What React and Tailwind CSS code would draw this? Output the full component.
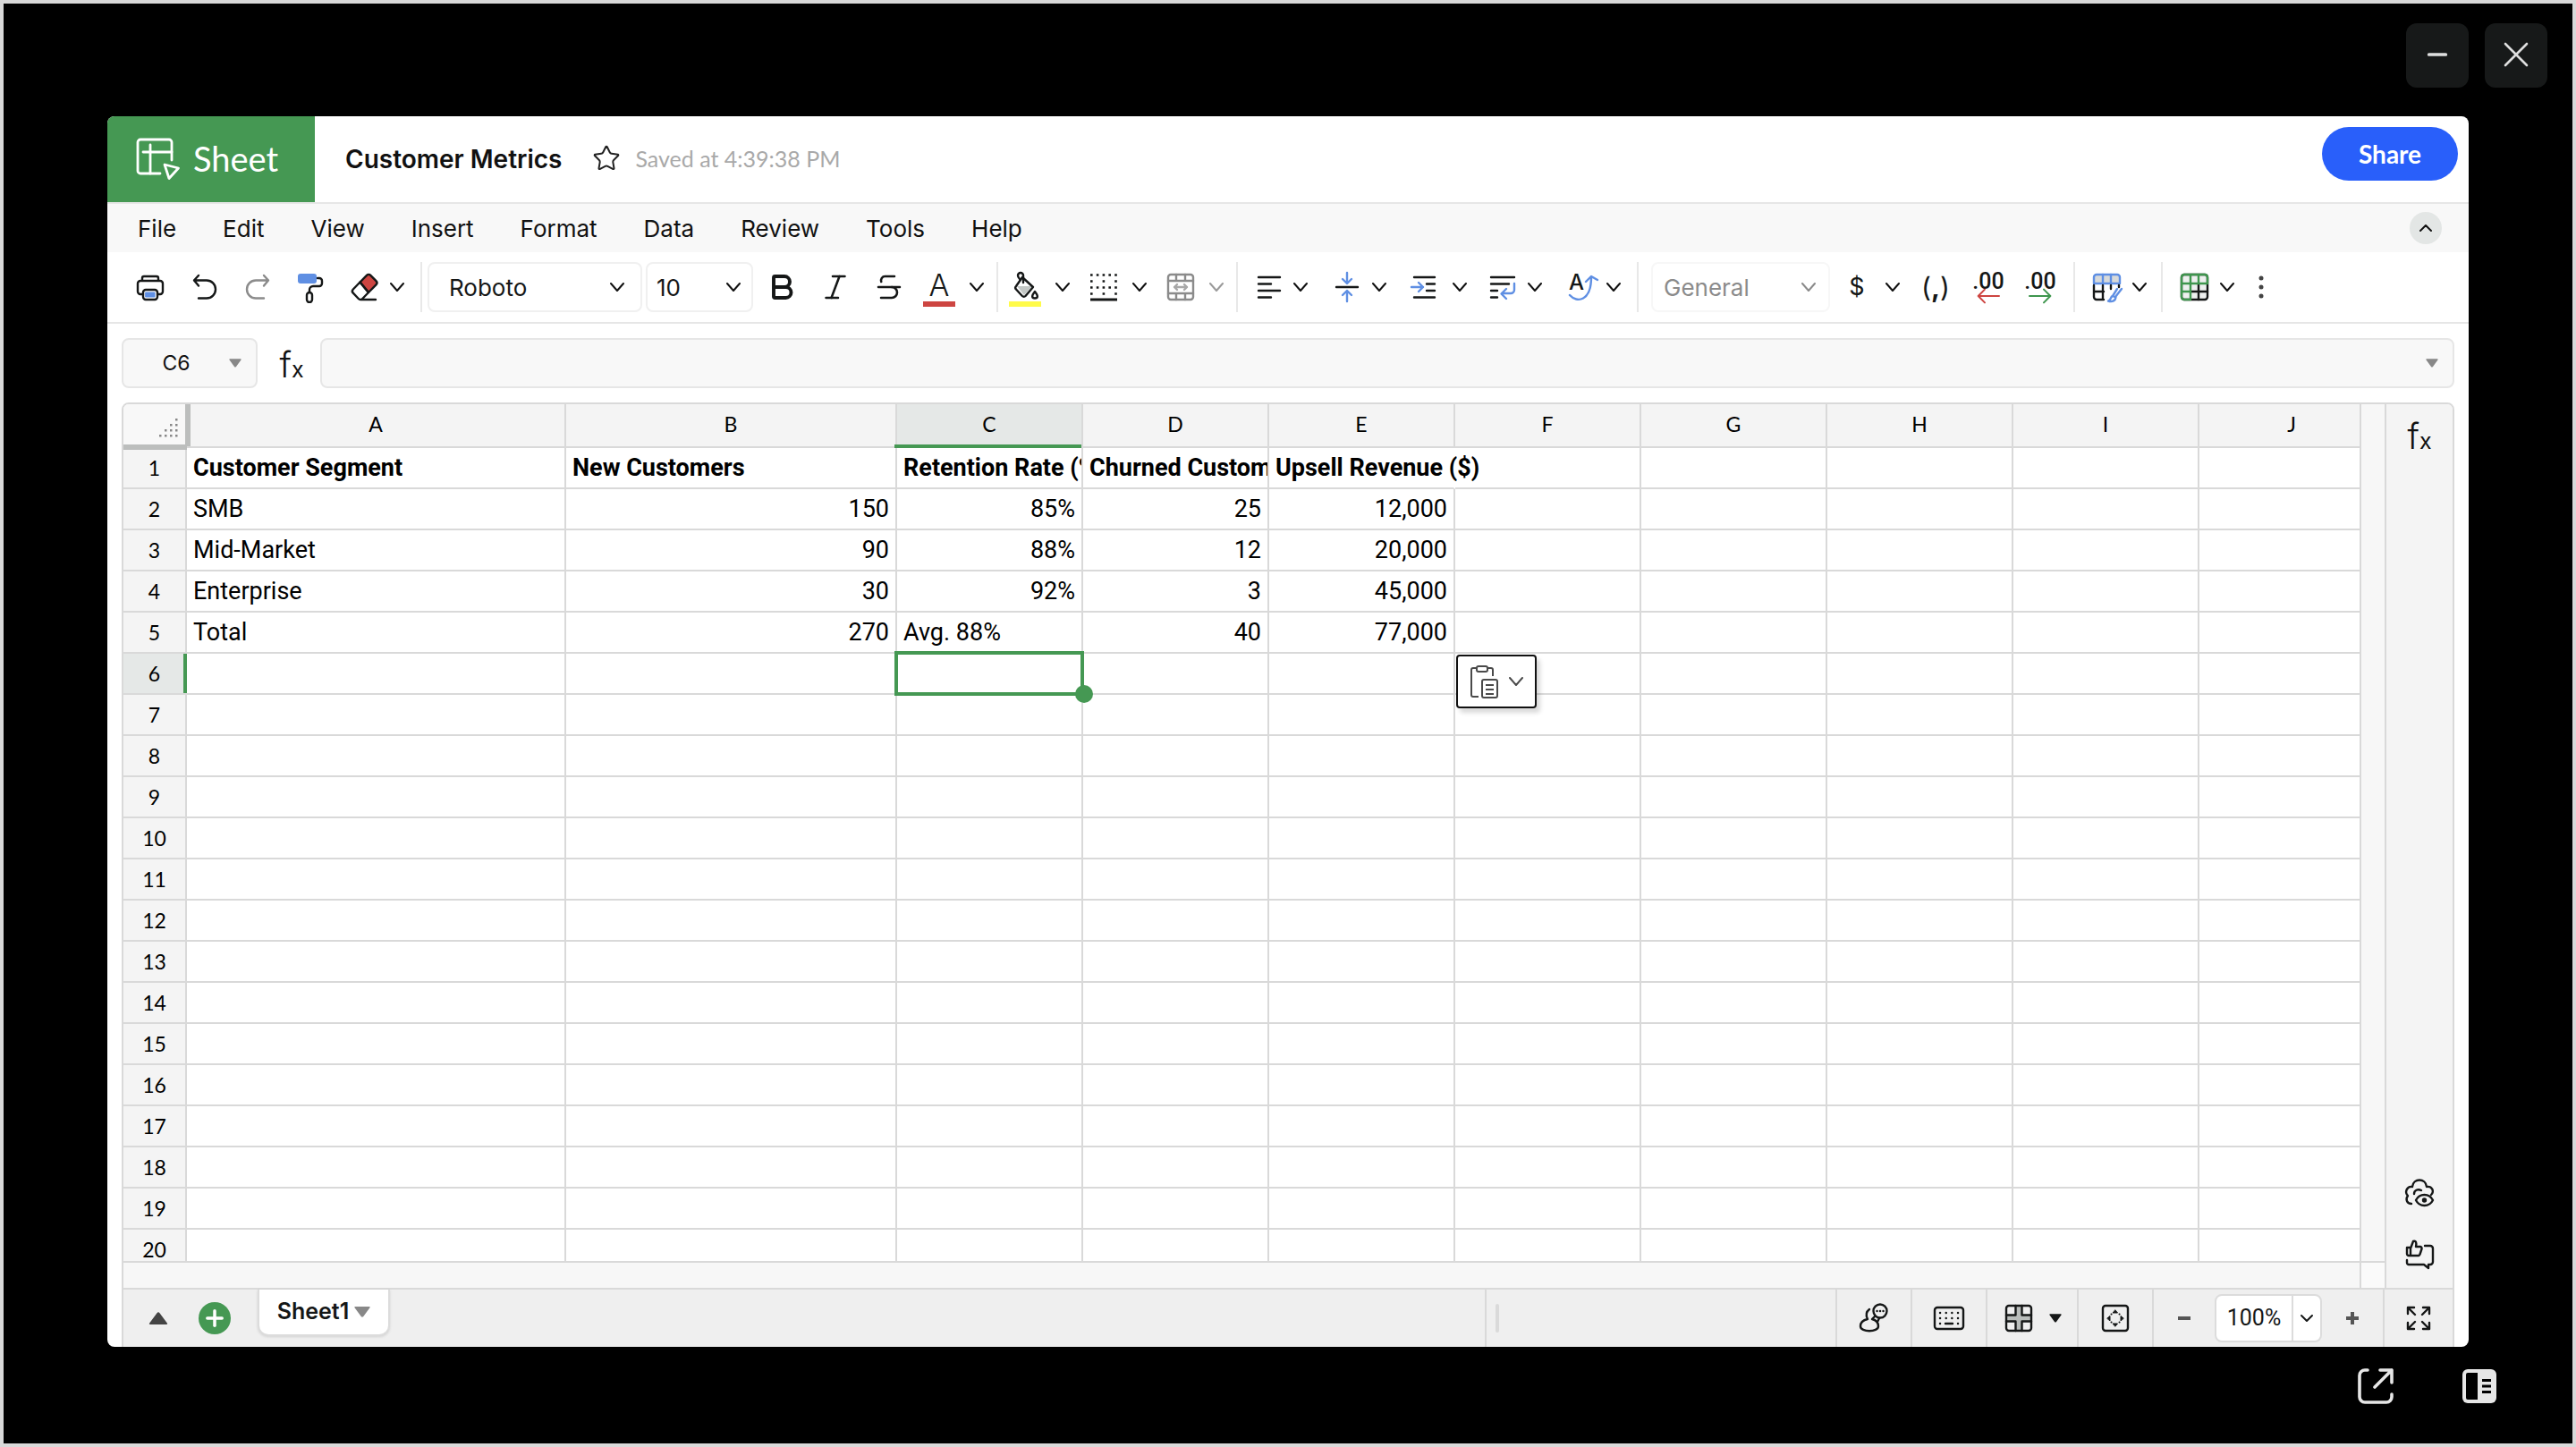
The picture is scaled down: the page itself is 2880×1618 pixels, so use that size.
import React, { useState } from "react";
import { Bold, Italic, Strikethrough, Star, Minus, Plus, X, ChevronDown, ChevronUp } from "lucide-react";

const MENUS = ["File", "Edit", "View", "Insert", "Format", "Data", "Review", "Tools", "Help"];
const COLUMNS = ["A", "B", "C", "D", "E", "F", "G", "H", "I", "J"];
const ROW_COUNT = 20;

// cell values by row number, in column order
const CELLS = {
    1: ["Customer Segment", "New Customers", "Retention Rate (%)", "Churned Customers", "Upsell Revenue ($)"],
    2: ["SMB", "150", "85%", "25", "12,000"],
    3: ["Mid-Market", "90", "88%", "12", "20,000"],
    4: ["Enterprise", "30", "92%", "3", "45,000"],
    5: ["Total", "270", "Avg. 88%", "40", "77,000"],
};

function Icon({ children, className = "size-9" }) {
    return (
        <svg viewBox="0 0 36 36" fill="none" stroke="currentColor" strokeWidth="2.4" strokeLinecap="round" strokeLinejoin="round" className={`shrink-0 ${className}`} aria-hidden="true">
            {children}
        </svg>
    );
}

function Chevron({ className = "text-[#111]" }) {
    return (
        <svg viewBox="0 0 16 10" fill="none" stroke="currentColor" strokeWidth="2" strokeLinecap="round" strokeLinejoin="round" className={`h-2.5 w-4 shrink-0 ${className}`} aria-hidden="true">
            <path d="M1 1l7 8 7-8" />
        </svg>
    );
}

function Triangle({ className }) {
    return (
        <svg viewBox="0 0 18 12" fill="currentColor" className={`shrink-0 ${className}`} aria-hidden="true">
            <path d="M1.500 0h15q2 0 .8 1.500L10.300 11q-1.300 1.500-2.600 0L.7 1.500Q-.5 0 1.500 0z" />
        </svg>
    );
}

function ToolButton({ label, className = "w-15", children }) {
    return (
        <button type="button" aria-label={label} className={`flex h-14 shrink-0 items-center justify-center ${className}`}>
            {children}
        </button>
    );
}

// icon and its arrow as one button
function ToolMenu({ label, className, children, muted }) {
    return (
        <button type="button" aria-label={label} aria-haspopup="menu" className={`flex h-14 shrink-0 items-center ${muted ? "text-[#8b8b8b]" : ""} ${className}`}>
            {children}
            <Chevron className={muted ? "text-[#9a9a9a]" : "text-[#111]"} />
        </button>
    );
}

function ToolSelect({ label, value, className, selectClass, arrowClass = "right-4", disabled }) {
    return (
        <div className={`relative h-14 shrink-0 ${className}`}>
            <select aria-label={label} defaultValue={value} disabled={disabled} className={`h-full w-full appearance-none rounded-lg border-2 bg-white text-[26px] ${selectClass}`}>
                <option>{value}</option>
            </select>
            <span className={`pointer-events-none absolute inset-y-0 flex items-center ${arrowClass}`}>
                <Chevron className={disabled ? "text-[#8b8b8b]" : "text-[#111]"} />
            </span>
        </div>
    );
}

function Divider({ className }) {
    return <span className={`h-14 w-0.5 shrink-0 bg-[#e8e8e8] ${className}`} />;
}

function FxMark() {
    return (
        <span className="flex items-baseline font-['Inter',sans-serif] leading-none text-[#111]">
            <span className="text-[39px] font-light">f</span>
            <span className="text-[25px]">x</span>
        </span>
    );
}

function Header() {
    return (
        <header className="flex h-24 shrink-0 items-center">
            <div className="flex h-full w-58 items-center gap-3.5 bg-[#459853] pl-8 text-white">
                <svg viewBox="0 0 50 50" fill="none" stroke="currentColor" strokeWidth="2.800" strokeLinejoin="round" strokeLinecap="round" className="size-[50px]" aria-hidden="true">
                    <path d="M27 41H5a3 3 0 0 1-3-3V6a3 3 0 0 1 3-3h32a3 3 0 0 1 3 3v20" />
                    <path d="M16 9v32M8 17h32" />
                    <path d="M32 31l15.500 4-10.500 11.500z" />
                </svg>
                <span className="pb-0.5 font-['Lato',sans-serif] text-[38px] leading-none">Sheet</span>
            </div>
            <h1 className="ml-8.5 text-[28px] font-semibold text-[#111]">Customer Metrics</h1>
            <button type="button" aria-label="Add to favourites" className="ml-8.5 pb-0.5">
                <Star className="size-8 text-[#222]" strokeWidth={1.5} />
            </button>
            <span className="ml-4 font-['Lato',sans-serif] text-[25px] text-[#a9a9a9]">Saved at 4:39:38 PM</span>
            <button type="button" className="mr-3 mb-3 ml-auto h-15 w-38 rounded-full bg-[#295ffa] font-['Lato',sans-serif] text-[28px] font-bold text-white">Share</button>
        </header>
    );
}

function MenuBar() {
    return (
        <nav className="flex h-14 shrink-0 items-center gap-13 border-t-2 border-[#e6e6e6] bg-[#f8f8f8] pl-8.5 text-[26px] text-[#111]">
            {MENUS.map((menu) => (
                <button key={menu} type="button">{menu}</button>
            ))}
            <button type="button" aria-label="Collapse toolbar" className="mr-7.5 ml-auto flex size-9 items-center justify-center rounded-full bg-[#e3e6e5]">
                <ChevronUp className="size-6" />
            </button>
        </nav>
    );
}

function Toolbar() {
    return (
        <div role="toolbar" aria-label="Formatting" className="flex h-20 shrink-0 items-center border-b-2 border-[#e6e6e6] pl-4.5 text-[#151717]">
            <ToolButton label="Print">
                <Icon>
                    <path d="M9 11V8a2 2 0 0 1 2-2h14a2 2 0 0 1 2 2v3M10 26H7a3 3 0 0 1-3-3v-9a3 3 0 0 1 3-3h22a3 3 0 0 1 3 3v9a3 3 0 0 1-3 3h-3" />
                    <rect x="10" y="21" width="16" height="11" rx="3" />
                    <path d="M13 24h10v5H13z" fill="#5f8fe3" stroke="#5f8fe3" strokeWidth="1" />
                </Icon>
            </ToolButton>
            <ToolButton label="Undo">
                <Icon><path d="M12 5l-5 5.500 5 6M7 10.500h14a9.500 9.500 0 0 1 0 20h-9" /></Icon>
            </ToolButton>
            <ToolButton label="Redo">
                <Icon className="size-9 text-[#8b8b8b]"><path d="M25 5l5 5.500-5 6M30 10.500H16a9.500 9.500 0 0 0 0 20h9" /></Icon>
            </ToolButton>
            <ToolButton label="Format painter">
                <Icon>
                    <rect x="3" y="3" width="21" height="11" rx="3" fill="#5f8fe3" stroke="none" />
                    <path d="M25 8h2a3 3 0 0 1 3 3v3a3 3 0 0 1-3 3h-7a4 4 0 0 0-4 4v3" />
                    <rect x="13" y="24" width="6" height="11" rx="3" />
                </Icon>
            </ToolButton>
            <ToolMenu label="Clear" className="ml-3 gap-2.5">
                <Icon>
                    <path d="M12.500 12.500L20 4.800a3 3 0 0 1 4.300 0l6.200 6.400a3 3 0 0 1 0 4.200L22 24z" fill="#cd4541" />
                    <path d="M12.500 12.500L4.800 20.500a3 3 0 0 0 0 4.200l6 6.300a3 3 0 0 0 4.400 0L22 24zM13 32h17" />
                </Icon>
            </ToolMenu>
            <Divider className="ml-[18px]" />
            <ToolSelect label="Font" value="Roboto" className="ml-1.5 w-60" selectClass="border-[#f0f0f0] pl-5.5" arrowClass="right-5" />
            <ToolSelect label="Font size" value="10" className="ml-1 w-30" selectClass="border-[#f0f0f0] pl-2.5" arrowClass="right-3.5" />
            <ToolButton label="Bold" className="ml-0.5 w-15"><Bold className="size-9" strokeWidth={2.6} /></ToolButton>
            <ToolButton label="Italic"><Italic className="size-9" strokeWidth={1.7} /></ToolButton>
            <ToolButton label="Strikethrough"><Strikethrough className="size-9" strokeWidth={1.7} /></ToolButton>
            <ToolMenu label="Text colour" className="ml-2 gap-4">
                <span className="flex h-11 w-9 flex-col items-center justify-end border-b-6 border-[#cd4541] text-[34px] leading-9 font-light">A</span>
            </ToolMenu>
            <Divider className="ml-3.5" />
            <ToolMenu label="Fill colour" className="ml-3 gap-4">
                <span className="flex h-11 w-9 items-end border-b-6 border-[#fffb4a]">
                    <Icon>
                        <path d="M9 19h17l-9 10z" fill="#c4c8c6" stroke="none" />
                        <path d="M15 9l12 11-8.500 10a2.500 2.500 0 0 1-3.600 0L8 22.500a2.500 2.500 0 0 1 0-3.500z" />
                        <path d="M16 15V7a3 3 0 0 0-6 0c0 2 1 3 2 4" />
                        <path d="M29 25c-4 5-3.500 7.500 0 7.500s4-2.500 0-7.500z" />
                    </Icon>
                </span>
            </ToolMenu>
            <ToolMenu label="Borders" className="ml-5 gap-3.5">
                <Icon>
                    <path d="M3 4.500h30M3 18.500h30" strokeWidth="2.600" strokeDasharray="2.600 4.200" strokeLinecap="butt" />
                    <path d="M3 11.500h30M3 25.500h30" strokeWidth="2.600" strokeDasharray="2.600 11" strokeLinecap="butt" />
                    <path d="M3 32h30" strokeWidth="3" strokeLinecap="butt" />
                </Icon>
            </ToolMenu>
            <ToolMenu label="Merge cells" className="ml-5 gap-3.5" muted>
                <Icon>
                    <rect x="4" y="4" width="28" height="28" rx="3" />
                    <path d="M4 11h28M4 25h28M13 4v7M23 4v7M13 25v7M23 25v7" />
                    <path d="M11 18h14M14 15l-3 3 3 3M22 15l3 3-3 3" stroke="#a8a8a8" />
                </Icon>
            </ToolMenu>
            <Divider className="ml-3.5" />
            <ToolMenu label="Horizontal align" className="ml-4 gap-2.5">
                <Icon><path d="M7 7h24M7 14.500h14M7 22h24M7 29.500h14" /></Icon>
            </ToolMenu>
            <ToolMenu label="Vertical align" className="ml-6.5 gap-2.5">
                <Icon>
                    <path d="M6 18h24" />
                    <path d="M18 2v11M13 9l5 5 5-5M18 34V23M13 27l5-5 5 5" stroke="#5f8fe3" />
                </Icon>
            </ToolMenu>
            <ToolMenu label="Indent" className="ml-6 gap-3.5">
                <Icon>
                    <path d="M7 7h23M21 14.500h9M21 22h9M7 29.500h23" />
                    <path d="M4 18h13M12 13l5 5-5 5" stroke="#5f8fe3" />
                </Icon>
            </ToolMenu>
            <ToolMenu label="Text wrap" className="ml-5.5 gap-2.5">
                <Icon>
                    <path d="M5 7h26M5 14.500h20M5 22h7M5 29.500h7" />
                    <path d="M31 14v7a4 4 0 0 1-4 4H17M22 20l-5.500 5.500L22 31" stroke="#5f8fe3" />
                </Icon>
            </ToolMenu>
            <ToolMenu label="Text rotation" className="ml-7 gap-2">
                <span className="relative flex size-9 items-center">
                    <span className="pb-2.5 pl-0.5 text-[24px] leading-none font-medium">A</span>
                    <Icon className="absolute inset-0 size-9">
                        <path d="M3 27c8 9 24 7 24-20M21 12l6-6 7 4" stroke="#5f8fe3" />
                    </Icon>
                </span>
            </ToolMenu>
            <Divider className="ml-4.5" />
            <ToolSelect label="Number format" value="General" className="ml-3.5 w-50" selectClass="border-[#f7f7f7] pl-3 text-[#8b8b8b] opacity-100" disabled />
            <ToolMenu label="Currency" className="ml-3 gap-3.5">
                <span className="w-9 text-center text-[27px]">$</span>
            </ToolMenu>
            <ToolButton label="Comma style" className="ml-2.5 w-15">
                <span className="text-[30px]">(<b>,</b>)</span>
            </ToolButton>
            <ToolButton label="Decrease decimals" className="w-14.5 pt-1.5">
                <span className="flex flex-col items-center font-['Roboto',sans-serif] text-[25px] leading-5 font-medium">
                    .00
                    <Icon className="-mt-1.5 h-6 w-7 text-[#cd4541]"><path d="M36 18H1M12 7L1 18l11 11" strokeWidth="3" /></Icon>
                </span>
            </ToolButton>
            <ToolButton label="Increase decimals" className="w-14.5 pt-1.5">
                <span className="flex flex-col items-center font-['Roboto',sans-serif] text-[25px] leading-5 font-medium">
                    .00
                    <Icon className="-mt-1.5 h-6 w-7 text-[#3f964e]"><path d="M0 18h35M24 7l11 11-11 11" strokeWidth="3" /></Icon>
                </span>
            </ToolButton>
            <Divider className="ml-2" />
            <ToolMenu label="Format as table" className="ml-4.5 gap-2.5">
                <Icon>
                    <path d="M3 14V7a3 3 0 0 1 3-3h23a3 3 0 0 1 3 3v7z" fill="#d8dada" stroke="#5f8fe3" />
                    <path d="M13 4v10M22 4v10" stroke="#5f8fe3" />
                    <path d="M3 16v13a3 3 0 0 0 3 3h8M13 16v16M3 23h11M22 16v4M31 16v2" />
                    <path d="M34 20l-7 9M29 20l-5 8M24 28c-3 1-1 4-5 5.500 5 1.500 8-.5 8.500-4z" stroke="#5f8fe3" />
                </Icon>
            </ToolMenu>
            <Divider className="ml-4" />
            <ToolMenu label="Insert cells" className="ml-4.5 gap-2.5">
                <Icon>
                    <rect x="3" y="4" width="29" height="28" rx="3" fill="#eef0ef" />
                    <path d="M13 23h19M22 14v18" />
                    <path d="M13 32H6a3 3 0 0 1-3-3V7a3 3 0 0 1 3-3h23a3 3 0 0 1 3 3v7H3M13 4v28M22 4v10M3 23h10" stroke="#3f964e" />
                </Icon>
            </ToolMenu>
            <ToolButton label="More">
                <Icon>
                    <g fill="#444" stroke="none"><circle cx="18" cy="8" r="2.500" /><circle cx="18" cy="18" r="2.500" /><circle cx="18" cy="28" r="2.500" /></g>
                </Icon>
            </ToolButton>
        </div>
    );
}

function FormulaBar() {
    return (
        <div className="flex h-22 shrink-0 items-center px-4 pb-px">
            <div className="flex h-14 w-38 items-center rounded-lg border-2 border-[#e6e6e6] bg-[#f8f8f8] pr-4">
                <input aria-label="Name box" defaultValue="C6" className="w-full min-w-0 pt-0.5 text-center text-[23px] text-[#111]" />
                <Triangle className="h-2.5 w-3.5 text-[#888]" />
            </div>
            <div className="flex w-[70px] justify-center pt-1 pl-1.5"><FxMark /></div>
            <div className="flex h-14 flex-1 items-center rounded-lg border-2 border-[#e6e6e6] bg-[#f8f8f8] pr-4">
                <input aria-label="Formula" className="h-full flex-1 px-3 text-[26px]" />
                <Triangle className="h-2.5 w-3.5 text-[#888]" />
            </div>
        </div>
    );
}

function PasteOptions() {
    return (
        <button type="button" aria-label="Paste options" className="absolute top-px left-px z-10 flex h-15 w-[90px] items-center justify-center gap-2.5 rounded border-2 border-[#111] bg-white text-[#4a4a4a] shadow-[4px_5px_5px_rgba(0,0,0,0.15)]">
            <svg viewBox="0 0 34 38" fill="none" stroke="currentColor" strokeWidth="2" className="h-[38px] w-[34px]" aria-hidden="true">
                <path d="M10 36H4a2 2 0 0 1-2-2V6a2 2 0 0 1 2-2h4M20 4h4a2 2 0 0 1 2 2v7" />
                <rect x="8" y="2" width="12" height="6" rx="2" />
                <rect x="14" y="17" width="17" height="20" rx="2" />
                <path d="M18 23h9M18 28h9M18 33h9" />
            </svg>
            <Chevron className="text-[#4a4a4a]" />
        </button>
    );
}

function Cell({ row, col, value }) {
    const heading = row === 1;
    const numeric = /^[\d,]+%?$/.test(value || "");
    // the last heading runs over into the empty cell on its right
    const spill = heading && col === "E";
    return (
        <td className={`relative h-[46px] border-r-2 border-b-2 border-b-[#d9d9d9] px-[7px] whitespace-nowrap ${spill ? "border-r-transparent" : "border-r-[#d9d9d9]"} ${spill || row === 6 ? "" : "overflow-clip"} ${heading ? "font-bold" : ""} ${numeric ? "text-right" : "text-left"}`}>
            {value}
            {row === 6 && col === "C" && (
                <>
                    <span className="absolute -inset-[3px] z-10 border-4 border-[#459853]" />
                    <span className="absolute -right-[13px] -bottom-[11px] z-10 size-5 rounded-full bg-[#459853]" />
                </>
            )}
            {row === 6 && col === "F" && <PasteOptions />}
        </td>
    );
}

function Grid() {
    const rows = Array.from({ length: ROW_COUNT }, (_, i) => i + 1);
    return (
        <div className="min-h-0 min-w-0 flex-1 overflow-hidden">
            <table className="w-[2529px] table-fixed border-separate border-spacing-0 font-['Roboto',sans-serif] text-[27px] leading-8 text-black">
                <colgroup>
                    <col className="w-[71px]" />
                    <col className="w-[424px]" />
                    <col className="w-[370px]" />
                    {COLUMNS.slice(2).map((c) => <col key={c} className="w-[208px]" />)}
                </colgroup>
                <thead>
                    <tr className="h-[49px] bg-[#f4f4f4] font-['Lato',sans-serif] text-[23px]">
                        <td className="relative border-b-2 border-[#bcbebd] bg-[#f8f8f8]">
                            <span className="absolute top-0 -right-1 h-[47px] w-1.5 bg-[#bcbebd]" />
                            <span className="absolute right-0 -bottom-1 left-0 z-10 h-1.5 bg-[#bcbebd]" />
                            <svg viewBox="0 0 22 22" fill="#888" className="absolute right-2.5 bottom-2.5 size-[22px]" aria-hidden="true">
                                <path d="M19 1h2.500v2.500H19zM13 7h2.500v2.500H13zM19 7h2.500v2.500H19zM7 13h2.500v2.500H7zM13 13h2.500v2.500H13zM19 13h2.500v2.500H19zM1 19h2.500v2.500H1zM7 19h2.500v2.500H7zM13 19h2.500v2.500H13zM19 19h2.500v2.500H19z" />
                            </svg>
                        </td>
                        {COLUMNS.map((c) => (
                            <th key={c} scope="col" className={`border-r-2 border-b-2 border-[#d9d9d9] pb-1 font-normal ${c === "C" ? "relative bg-[#e5e8e7]" : ""}`}>
                                {c}
                                {c === "C" && <span className="absolute right-0 -bottom-0.5 -left-[3px] h-1 bg-[#459853]" />}
                            </th>
                        ))}
                    </tr>
                </thead>
                <tbody>
                    {rows.map((row) => (
                        <tr key={row}>
                            <th scope="row" className={`border-r-2 border-b-2 border-[#d9d9d9] font-['Lato',sans-serif] text-[23px] font-normal ${row === 6 ? "relative bg-[#e5e8e7]" : "bg-[#f4f4f4]"}`}>
                                {row}
                                {row === 6 && <span className="absolute inset-y-0 -right-0.5 w-1 bg-[#459853]" />}
                            </th>
                            {COLUMNS.map((c, i) => (
                                <Cell key={c} row={row} col={c} value={CELLS[row]?.[i]} />
                            ))}
                        </tr>
                    ))}
                </tbody>
            </table>
        </div>
    );
}

function SidePanel() {
    return (
        <aside className="flex w-[76px] shrink-0 flex-col items-center border-l-2 border-[#d9d9d9] bg-[#f4f4f4] pt-4 text-[#151717]">
            <button type="button" aria-label="Functions"><FxMark /></button>
            <button type="button" aria-label="View settings" className="mt-auto">
                <Icon>
                    <path d="M9 30C4 30 2 25 5 21C1 17 4 10 10 11C11 1 25 1 26 11C32 10 35 16 31 20" />
                    <path d="M12 19c0-4 4-6 8-4" />
                    <path d="M14 26c4-8 15-8 19 0-4 8-15 8-19 0z" />
                    <circle cx="23.500" cy="26" r="1.500" fill="currentColor" />
                </Icon>
            </button>
            <button type="button" aria-label="Feedback" className="mt-8 mb-5">
                <Icon>
                    <path d="M4 11h4v9H6a2 2 0 0 1-2-2zM8 12l3-8c3-1 4 1 3 6h5a2 2 0 0 1 1.500 2.500l-2 6A2 2 0 0 1 17 20H8" />
                    <path d="M24 9h6a3 3 0 0 1 3 3v15a3 3 0 0 1-3 3h-2v4l-5-4H6a2 2 0 0 1-2-2v-3" />
                </Icon>
            </button>
        </aside>
    );
}

function StatusBar() {
    const [zoom, setZoom] = useState(100);
    const cell = "flex shrink-0 items-center justify-center border-l-2 border-[#d9d9d9]";
    return (
        <footer className="mx-4 flex h-16 shrink-0 border-x-2 border-[#d9d9d9] bg-[#efefef] text-[#151717]">
            <button type="button" aria-label="All sheets" className="ml-6.5 flex items-center">
                <Triangle className="h-3.5 w-6.5 rotate-180 text-[#444]" />
            </button>
            <button type="button" aria-label="Add sheet" className="ml-8 flex size-9 items-center justify-center self-center rounded-full bg-[#459853] text-white">
                <Plus className="size-7" strokeWidth={3} />
            </button>
            <button type="button" className="ml-7.5 flex h-[52px] w-37 items-center justify-center gap-1.5 rounded-b-xl border-x-2 border-b-2 border-[#dcdcdc] bg-white text-[25px] font-semibold shadow-[0_1px_3px_rgba(0,0,0,0.12)]">
                Sheet1
                <Triangle className="h-3 w-4.5 text-[#888]" />
            </button>
            <div className="ml-auto flex w-[392px] shrink-0 items-center border-l-2 border-[#d9d9d9] pl-2.5">
                <span className="h-8 w-1 rounded-full bg-[#dadada]" />
            </div>
            <button type="button" aria-label="Comments" className={`${cell} w-21`}>
                <Icon>
                    <path d="M13 8c-4 3-4 7-2 11-5 1-8 4-8 8 0 7 20 7 20 0 0-4-3-7-7-8l3-3" />
                    <circle cx="25" cy="10" r="7.500" />
                    <path d="M21.500 10h.1M25 10h.1M28.500 10h.1M24 18l-2 4" />
                </Icon>
            </button>
            <button type="button" aria-label="Keyboard" className={`${cell} w-21`}>
                <Icon>
                    <rect x="2" y="6" width="32" height="24" rx="3" />
                    <path d="M8 12h.1M14.700 12h.1M21.300 12h.1M28 12h.1M8 18h.1M14.700 18h.1M21.300 18h.1M28 18h.1M8 24h.1M28 24h.1M14 24h8" />
                </Icon>
            </button>
            <button type="button" aria-label="Freeze panes" className={`${cell} w-[102px] gap-4`}>
                <Icon>
                    <path d="M14 4h8v28h-8zM4 14h28v8H4z" fill="#b9bdbb" stroke="none" />
                    <rect x="4" y="4" width="28" height="28" rx="3" />
                    <path d="M14.500 4v10.500H4M21.500 4v10.500H32M14.500 32V21.500H4M21.500 32V21.500H32" />
                </Icon>
                <Triangle className="h-2.5 w-3.5" />
            </button>
            <button type="button" aria-label="Fit to screen" className={`${cell} w-21`}>
                <Icon>
                    <rect x="4" y="4" width="28" height="28" rx="3" />
                    <path d="M18 9l2.500 3h-5zM18 27l2.500-3h-5zM9 18l3-2.500v5zM27 18l-3-2.500v5z" fill="currentColor" strokeWidth="1" />
                    <path d="M13.500 13.500h.1M22.500 13.500h.1M13.500 22.500h.1M22.500 22.500h.1" strokeWidth="2" />
                </Icon>
            </button>
            <div className={`${cell} w-[258px]`}>
                <button type="button" aria-label="Zoom out" onClick={() => setZoom(zoom - 10)} className="flex size-6 items-center justify-center text-[#555]">
                    <Minus className="size-6" strokeWidth={4} strokeLinecap="butt" />
                </button>
                <div className="mx-5.5 flex h-[54px] w-30 items-center rounded-lg border-2 border-[#dcdcdc] bg-white">
                    <input aria-label="Zoom" readOnly value={`${zoom}%`} className="w-[84px] text-center font-['Roboto',sans-serif] text-[25px]" />
                    <button type="button" aria-label="Zoom levels" className="flex h-full flex-1 items-center justify-center border-l-2 border-[#dcdcdc]">
                        <ChevronDown className="size-6" strokeWidth={2} />
                    </button>
                </div>
                <button type="button" aria-label="Zoom in" onClick={() => setZoom(zoom + 10)} className="flex size-6 items-center justify-center text-[#555]">
                    <Plus className="size-6" strokeWidth={4} strokeLinecap="butt" />
                </button>
            </div>
            <button type="button" aria-label="Full screen" className={`${cell} w-[78px]`}>
                <Icon>
                    <path d="M6 13V6h7M23 6h7v7M30 23v7h-7M13 30H6v-7M7 7l7 7M29 7l-7 7M29 29l-7-7M7 29l7-7" />
                </Icon>
            </button>
        </footer>
    );
}

export default function App() {
    return (
        <div className="h-screen bg-[#d9d9d9] p-1 font-['Inter',sans-serif]">
            <div className="flex h-full flex-col bg-black">
                <div className="flex h-[126px] shrink-0 justify-end gap-4.5 pt-5.5 pr-7 text-[#dedede]">
                    <button type="button" aria-label="Minimize" className="flex h-18 w-[70px] items-center justify-center rounded-xl bg-[#171919] pb-0.5">
                        <Minus className="size-8" strokeWidth={2.8} />
                    </button>
                    <button type="button" aria-label="Close" className="flex h-18 w-[70px] items-center justify-center rounded-xl bg-[#171919] pb-0.5">
                        <X className="size-12" strokeWidth={1.3} />
                    </button>
                </div>
                <main className="mx-[116px] flex min-h-0 flex-1 flex-col overflow-hidden rounded-lg bg-white">
                    <Header />
                    <MenuBar />
                    <Toolbar />
                    <FormulaBar />
                    <div className="mx-4 flex min-h-0 flex-1 overflow-hidden rounded-t-lg border-2 border-[#d9d9d9]">
                        <div className="flex min-w-0 flex-1 flex-col">
                            <div className="flex min-h-0 flex-1">
                                <Grid />
                                <div className="w-7 shrink-0 border-l-2 border-[#d9d9d9] bg-[#f7f7f7]" />
                            </div>
                            <div className="flex h-7.5 shrink-0 border-t-2 border-[#d9d9d9] bg-[#f7f7f7]">
                                <div className="ml-auto w-7 border-l-2 border-[#d9d9d9] bg-[#fafafa]" />
                            </div>
                        </div>
                        <SidePanel />
                    </div>
                    <StatusBar />
                </main>
                <div className="flex h-27 shrink-0 justify-end gap-19 pt-6 pr-21 text-[#e6e6e6]">
                    <button type="button" aria-label="Open in new tab" className="size-10">
                        <svg viewBox="0 0 40 40" fill="none" stroke="currentColor" strokeWidth="3.600" strokeLinecap="round" strokeLinejoin="round" className="size-10" aria-hidden="true">
                            <path d="M11 2H8a6 6 0 0 0-6 6v24a6 6 0 0 0 6 6h24a6 6 0 0 0 6-6v-3M25 2h13v14M38 2L19 21" />
                        </svg>
                    </button>
                    <button type="button" aria-label="Side panel" className="size-10">
                        <svg viewBox="0 0 40 40" className="size-10" aria-hidden="true">
                            <rect x="1" y="1" width="38" height="38" rx="6" fill="currentColor" />
                            <path d="M7 5h11v30H7a2 2 0 0 1-2-2V7a2 2 0 0 1 2-2zM23 12h10v3H23zM23 18.500h10v3H23zM23 25h10v3H23z" fill="#000" />
                        </svg>
                    </button>
                </div>
            </div>
        </div>
    );
}
